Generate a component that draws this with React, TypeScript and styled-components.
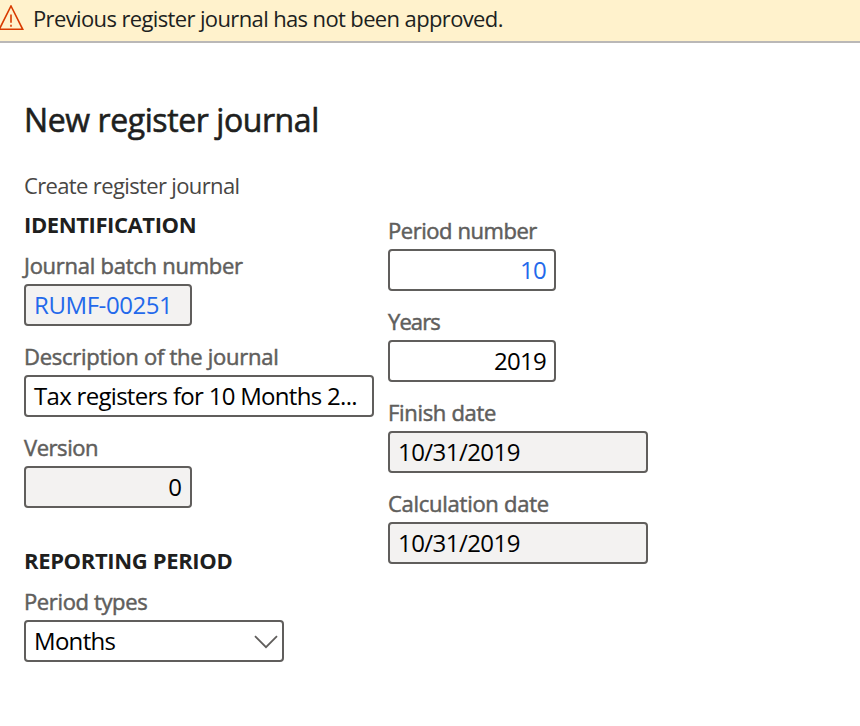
import React from "react";
import styled, { createGlobalStyle } from "styled-components";

const GlobalStyle = createGlobalStyle`
  * { box-sizing: border-box; }
  body { margin: 0; background: #fff; font-family: "Segoe UI", "Open Sans", "Noto Sans", sans-serif; }
`;

const Page = styled.div`
  width: 860px;
  height: 726px;
  overflow: hidden;
`;

const Banner = styled.div`
  display: flex;
  align-items: center;
  gap: 9px;
  height: 43px;
  padding-bottom: 6px;
  border-bottom: 2px solid #bab8b7;
  background: #fff2cc;
  color: #201f1e;
`;

const Text = styled.span<{ $track?: number }>`
  letter-spacing: ${(p) => p.$track ?? 0}px;
  white-space: nowrap;
`;

const BannerText = styled(Text)`
  font-size: 22px;
  line-height: 30px;
`;

const Main = styled.main`
  padding: 52px 24px 0;
`;

const Title = styled.h1`
  margin: 0;
  font-size: 32px;
  line-height: 50px;
  font-weight: 400;
  -webkit-text-stroke: 0.6px currentColor;
  color: #201f1e;
`;

const Subtitle = styled.p`
  margin: 25px 0 0;
  font-size: 22px;
  line-height: 30px;
  font-weight: 400;
  color: #484644;
`;

const Columns = styled.div`
  display: grid;
  grid-template-columns: 350px 260px;
  column-gap: 14px;
  margin-top: 9px;
`;

const Column = styled.div<{ $offset?: number }>`
  padding-top: ${(p) => p.$offset ?? 0}px;
`;

const GroupTitle = styled.h2<{ $gap?: number }>`
  margin: ${(p) => p.$gap ?? 0}px 0 11px;
  font-size: 22px;
  line-height: 30px;
  font-weight: 700;
  color: #201f1e;
`;

const FieldGroup = styled.div`
  display: flex;
  flex-direction: column;
  gap: 15px;
`;

const Label = styled.div`
  height: 34px;
  font-size: 22px;
  line-height: 31px;
  font-weight: 400;
  -webkit-text-stroke: 0.5px currentColor;
  color: #605e5c;
`;

const Box = styled.div<{ $w: number; $readOnly?: boolean; $right?: boolean; $link?: boolean }>`
  display: flex;
  align-items: center;
  justify-content: ${(p) => (p.$right ? "flex-end" : "space-between")};
  width: ${(p) => p.$w}px;
  height: 42px;
  padding: 0 8px 1px;
  border: 2px solid #605e5c;
  border-radius: 4px;
  background: ${(p) => (p.$readOnly ? "#f3f2f1" : "#fff")};
  color: ${(p) => (p.$link ? "#2369eb" : "#000")};
  font-size: 24px;
  line-height: 34px;
`;

const Chevron = styled.svg`
  flex: none;
  margin: 2px -4px 0 0;
`;

type FieldProps = {
  label: string;
  value: string;
  width: number;
  labelTrack?: number;
  track?: number;
  readOnly?: boolean;
  right?: boolean;
  link?: boolean;
  select?: boolean;
};

function Field({ label, value, width, labelTrack, track, readOnly, right, link, select }: FieldProps) {
  return (
    <div>
      <Label>
        <Text $track={labelTrack}>{label}</Text>
      </Label>
      <Box $w={width} $readOnly={readOnly} $right={right} $link={link}>
        <Text $track={track}>{value}</Text>
        {select && (
          <Chevron width="24" height="14" viewBox="0 0 24 14" fill="none" stroke="#605e5c" strokeWidth="1.8">
            <path d="M1 1.2 12 12.2 23 1.2" />
          </Chevron>
        )}
      </Box>
    </div>
  );
}

export default function App() {
  return (
    <Page>
      <GlobalStyle />
      <Banner>
        <svg width="24" height="26" viewBox="0 0 24 26" fill="none" stroke="#d83b01" strokeWidth="1.6">
          <path d="M11 1 22.7 24.3H-.7Z" />
          <path d="M11 9.5v8.2M11 19.7v2" />
        </svg>
        <BannerText $track={-0.63}>Previous register journal has not been approved.</BannerText>
      </Banner>
      <Main>
        <Title>
          <Text $track={-0.42}>New register journal</Text>
        </Title>
        <Subtitle>
          <Text $track={-0.64}>Create register journal</Text>
        </Subtitle>
        <Columns>
          <Column>
            <GroupTitle>
              <Text $track={-0.4}>IDENTIFICATION</Text>
            </GroupTitle>
            <FieldGroup>
              <Field label="Journal batch number" labelTrack={-0.26} value="RUMF-00251" track={-0.42} width={168} readOnly link />
              <Field label="Description of the journal" labelTrack={-0.27} value="Tax registers for 10 Months 2..." track={-0.7} width={350} />
              <Field label="Version" labelTrack={-0.45} value="0" width={168} readOnly right />
            </FieldGroup>
            <GroupTitle $gap={37}>
              <Text $track={-0.35}>REPORTING PERIOD</Text>
            </GroupTitle>
            <Field label="Period types" labelTrack={-0.37} value="Months" track={-0.7} width={260} select />
          </Column>
          <Column $offset={6}>
            <FieldGroup>
              <Field label="Period number" labelTrack={-0.45} value="10" track={-0.7} width={168} right link />
              <Field label="Years" labelTrack={-0.9} value="2019" track={-0.7} width={168} right />
              <Field label="Finish date" labelTrack={-0.32} value="10/31/2019" track={-0.55} width={260} readOnly />
              <Field label="Calculation date" labelTrack={-0.27} value="10/31/2019" track={-0.55} width={260} readOnly />
            </FieldGroup>
          </Column>
        </Columns>
      </Main>
    </Page>
  );
}
